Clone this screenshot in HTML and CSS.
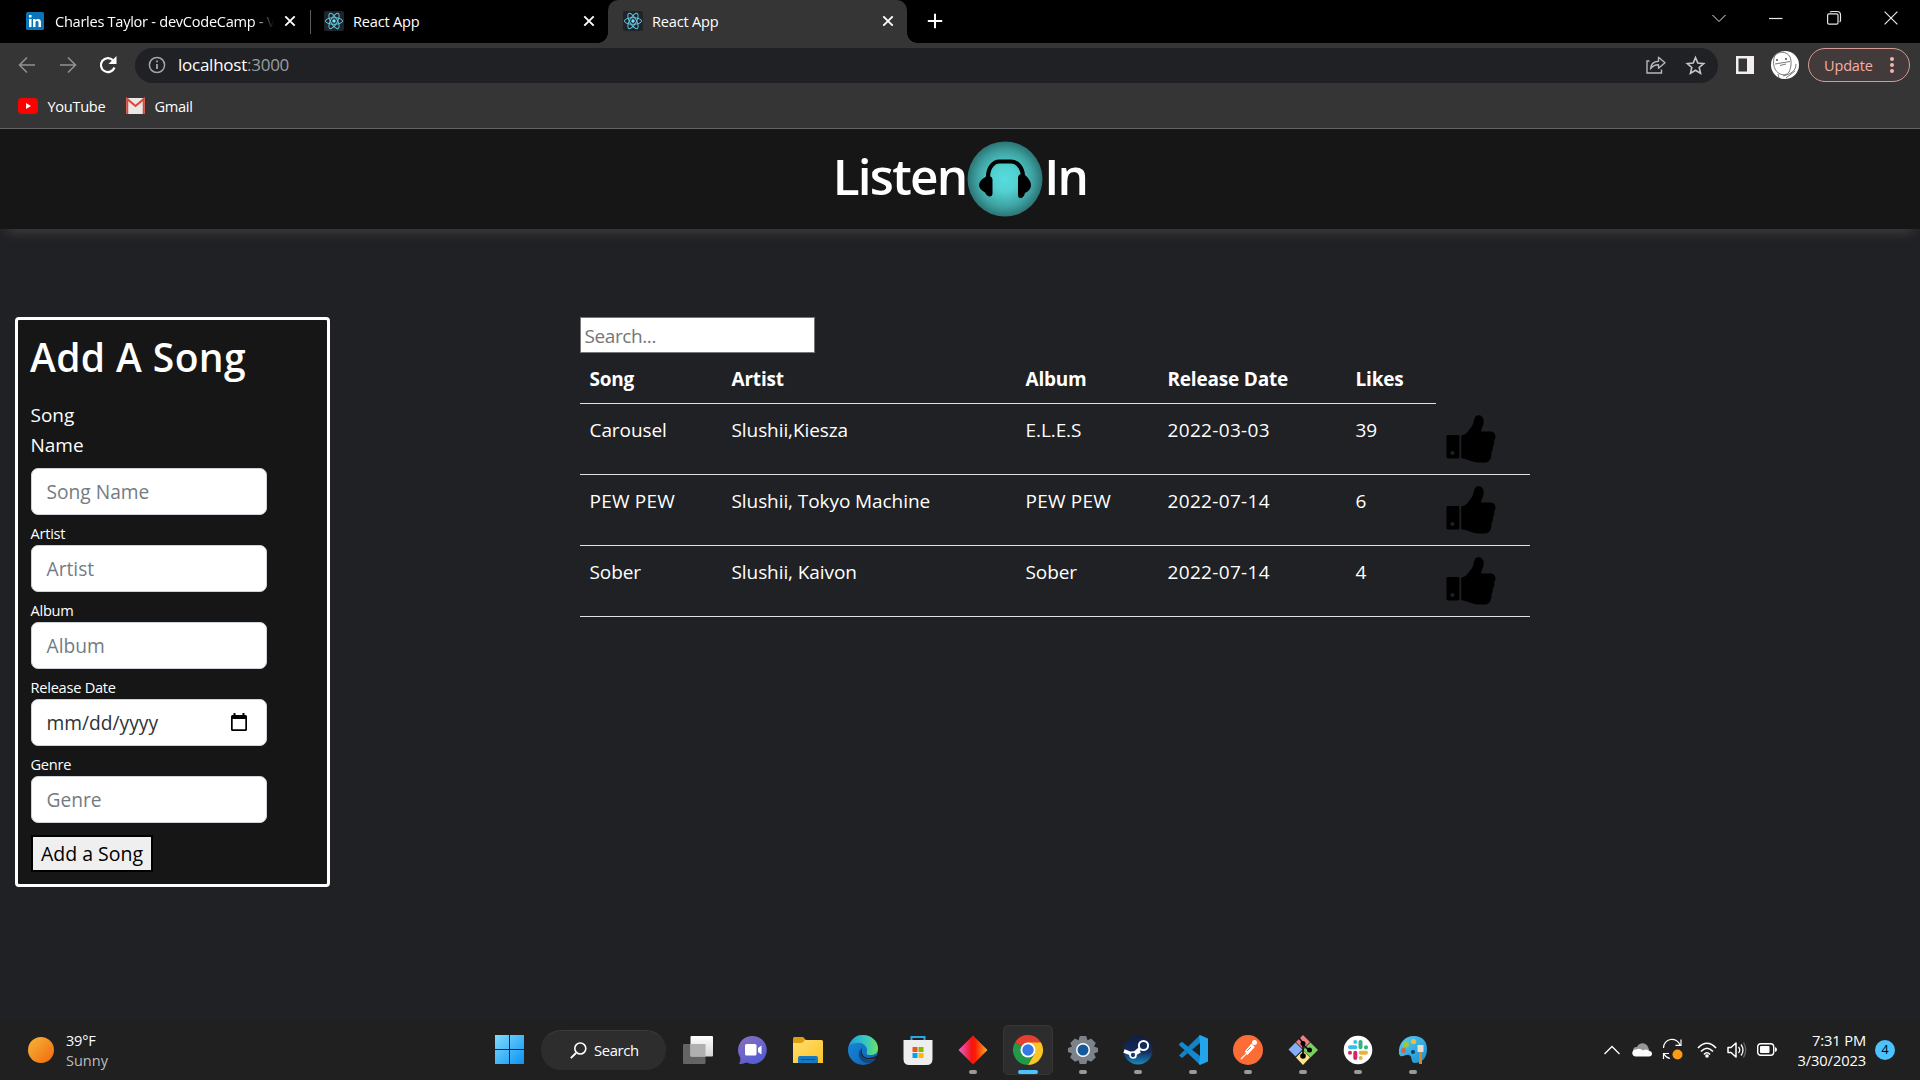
FILE: index.html
```html
<!DOCTYPE html>
<html lang="en">
<head>
<meta charset="utf-8">
<title>React App</title>
<link rel="stylesheet" href="styles.css">
</head>
<body>
<svg class="defs" width="0" height="0" aria-hidden="true">
  <symbol id="react" viewBox="0 0 20 20">
    <rect width="20" height="20" rx="2" fill="#20232a"/>
    <g fill="none" stroke="#5fc6de" stroke-width="1">
      <ellipse cx="10" cy="10" rx="8.6" ry="3.3"/>
      <ellipse cx="10" cy="10" rx="8.6" ry="3.3" transform="rotate(60 10 10)"/>
      <ellipse cx="10" cy="10" rx="8.6" ry="3.3" transform="rotate(120 10 10)"/>
    </g>
    <circle cx="10" cy="10" r="1.7" fill="#7fe3f5"/>
  </symbol>
  <symbol id="close" viewBox="0 0 12 12"><path d="M1.3 1.3l9.4 9.4M10.7 1.3l-9.4 9.4" stroke="#fff" stroke-width="1.9"/></symbol>
  <symbol id="thumb" viewBox="0 0 50 50">
    <path fill="#000" fill-rule="evenodd" d="M1.5 20.5h10.3q1.4 0 1.4 1.4v21q0 1.4-1.4 1.4H1.5Q0 44.300 0 42.900v-21Q0 20.500 1.500 20.500zM6 36.800a2 2 0 1 0 .01 0z"/>
    <path fill="#000" d="M16.500 20.500c4-.8 6.500-5.500 9.200-8.800 2.500-3.200 1.800-8 4-10.400C32.300-.9 38 .600 38 6.500c0 4-2.300 7-2.800 10.300h9.600c3.200 0 5.200 2.500 5.200 5.200 0 2.500-1.300 3.600-1.600 4.300.8 2 .4 4.600-1.200 6 .4 2.400-.2 4.400-1.300 5.700.2 6-2 10.500-6.900 10.500h-6c-7 0-10.500-3.300-16.600-4q-1.400-.2-1.400-1.500V22q0-1.300 1.500-1.500z"/>
  </symbol>
</svg>

<header class="tabs">
  <div class="tab first">
    <svg class="fav" viewBox="0 0 18 18"><rect width="18" height="18" rx="1.500" fill="#0a74b8"/><path fill="#fff" d="M3 7h2.500v8H3zM3 3h2.500v2.500H3zM7 7h2.400v1.200C10.500 6.300 15 6.100 15 10v5h-2.500v-4.500c0-2-3-1.800-3 0V15H7z"/></svg>
    <span class="tab-title fade">Charles Taylor - devCodeCamp - V</span>
    <svg class="x"><use href="#close"/></svg>
  </div>
  <div class="tab second">
    <svg class="fav"><use href="#react"/></svg>
    <span class="tab-title">React App</span>
    <svg class="x"><use href="#close"/></svg>
  </div>
  <div class="tab active">
    <svg class="fav"><use href="#react"/></svg>
    <span class="tab-title">React App</span>
    <svg class="x"><use href="#close"/></svg>
  </div>
  <svg class="plus" viewBox="0 0 16 16"><path d="M8 .8v14.400M.8 8h14.400" stroke="#fff" stroke-width="2"/></svg>
  <div class="window-controls">
    <svg viewBox="0 0 14 14"><path d="M.5 4l6.500 6.500L13.500 4"/></svg>
    <svg viewBox="0 0 14 14"><path d="M0 7.500h13.500"/></svg>
    <svg viewBox="0 0 14 14"><rect x=".6" y="2.800" width="10.400" height="10.400" rx="1.500"/><path d="M3 1.200Q3.500.5 5 .5h5q3.500 0 3.500 3.500v5q0 1.500-.8 2"/></svg>
    <svg viewBox="0 0 14 14"><path d="M.6.600l12.800 12.800M13.400.600L.6 13.400"/></svg>
  </div>
</header>

<nav class="toolbar">
  <div class="nav-buttons">
    <svg viewBox="0 0 18 18" stroke="#909193"><path d="M17 9H2M9 1.500L1.500 9 9 16.500"/></svg>
    <svg viewBox="0 0 18 18" stroke="#909193"><path d="M1 9h15M9 1.500L16.500 9 9 16.500"/></svg>
    <svg viewBox="0 0 18 18" stroke="#fff"><path stroke-width="2.200" d="M15.500 11.500A7 7 0 1 1 14 4.200"/><path fill="#fff" stroke="none" d="M17.500 0v8h-8z"/></svg>
  </div>
  <div class="omnibox">
    <svg class="info" viewBox="0 0 18 18"><circle cx="9" cy="9" r="7.600" fill="none" stroke="#a2a5a9" stroke-width="1.500"/><path d="M9 8v5M9 4.500v1.800" stroke="#a2a5a9" stroke-width="1.800"/></svg>
    <span class="url">localhost<i>:3000</i></span>
    <svg class="share" viewBox="0 0 20 18" fill="none" stroke="#b5b8bb" stroke-width="1.400"><path d="M3.500 5H1v12h14.500v-3.500"/><path stroke-linejoin="round" d="M4.500 13c.3-5 3.500-7.600 8-7.800V1.200L19 6.800l-6.500 5.500V8.800c-4 0-6.300 1.300-8 4.200z"/></svg>
    <svg class="star" viewBox="0 0 18 18"><path fill="none" stroke="#c4c6c8" stroke-width="1.500" d="M9 1.500l2.200 5.200 5.600.5-4.300 3.700 1.300 5.500L9 13.500l-4.800 2.900 1.300-5.500L1.200 7.200l5.600-.5z"/></svg>
  </div>
  <svg class="panel" viewBox="0 0 18 18"><path fill="#f4eef2" fill-rule="evenodd" d="M0 0h18v18H0zM2.500 2.500v13H11v-13z"/></svg>
  <svg class="avatar" viewBox="0 0 28 28"><circle cx="14" cy="14" r="14" fill="#fff"/><g fill="none" stroke="#6a6a6a" stroke-width=".9"><path d="M4 4.500C8 0 16 0 19 6c2 5 1 11-1 15-3 5-11 3-14-3C2 14 2 8 4 4.500zM4 13l15-2.500M9 14.500l6-1.500M25 13c0 6-4 10-13 12M7 23l1 4M15 27l9-7"/></g><circle cx="6" cy="9" r=".9" fill="#333"/><circle cx="15" cy="8" r=".9" fill="#333"/></svg>
  <div class="update"><span>Update</span><svg viewBox="0 0 4 18" fill="#f3b5ae"><circle cx="2" cy="3" r="2"/><circle cx="2" cy="9" r="2"/><circle cx="2" cy="15" r="2"/></svg></div>
</nav>

<div class="bookmarks">
  <svg class="yt" viewBox="0 0 20 14"><rect y="-1" width="20" height="16" rx="4" fill="#f00"/><path d="M8 4l5 3-5 3z" fill="#fff"/></svg>
  <span class="bm-youtube">YouTube</span>
  <svg class="gm" viewBox="0 0 19 14"><rect y="-1" width="19" height="16" rx="1" fill="#eae7e5"/><path d="M1.200 15V0l8.300 7 8.300-7v15" fill="none" stroke="#d9463b" stroke-width="2.100"/></svg>
  <span class="bm-gmail">Gmail</span>
</div>

<div class="brand">
  <h1>Listen</h1>
  <svg viewBox="0 0 76 76">
    <defs><radialGradient id="teal"><stop offset="0" stop-color="#58dcdc"/><stop offset=".35" stop-color="#52d0d0"/><stop offset=".75" stop-color="#3ea1a1"/><stop offset="1" stop-color="#2c7474"/></radialGradient></defs>
    <circle cx="38" cy="38" r="37.500" fill="url(#teal)"/>
    <path d="M21 36C21 26 27 20.500 32 20.500h12c6 0 12 6 12 15.500" fill="none" stroke="#000" stroke-width="4.200"/>
    <path d="M18.500 36q1-1.500 3.500-1 3.500.5 3.500 4v13q0 4-3.500 3.500Q19.500 55 18 51.500c-8-4-8-11 .5-15.500zM51 37q0-3.500 3.500-4 2.500-.5 3.500 1c8 7 8 14 0 18-1 4-3 5.500-5 5-2-.5-2-2-2-4z" fill="#000"/>
  </svg>
  <h1>In</h1>
</div>

<main class="page">
  <form class="song-form">
    <h2>Add A Song</h2>
    <label class="name-label">Song<br>Name</label>
    <div class="field"><span>Song Name</span></div>
    <label>Artist</label>
    <div class="field"><span>Artist</span></div>
    <label>Album</label>
    <div class="field"><span>Album</span></div>
    <label>Release Date</label>
    <div class="field date"><span>mm/dd/yyyy</span>
      <svg viewBox="0 0 16 18"><path fill="#000" fill-rule="evenodd" d="M2.500 0h2v2h7V0h2v2h1Q16 2 16 3.500v13q0 1.500-1.500 1.500h-13Q0 18 0 16.500v-13Q0 2 1.500 2h1zM1.700 6v10.300h12.600V6z"/></svg></div>
    <label>Genre</label>
    <div class="field"><span>Genre</span></div>
    <button type="button"><span>Add a Song</span></button>
  </form>

  <section class="songs">
    <div class="search">Search...</div>
    <div class="row head"><span>Song</span><span>Artist</span><span>Album</span><span>Release Date</span><span>Likes</span></div>
    <div class="row"><span>Carousel</span><span>Slushii,Kiesza</span><span>E.L.E.S</span><span class="day">2022-03-03</span><span>39</span><svg><use href="#thumb"/></svg></div>
    <div class="row"><span class="caps">PEW PEW</span><span>Slushii, Tokyo Machine</span><span class="caps">PEW PEW</span><span class="day">2022-07-14</span><span>6</span><svg><use href="#thumb"/></svg></div>
    <div class="row"><span>Sober</span><span>Slushii, Kaivon</span><span>Sober</span><span class="day">2022-07-14</span><span>4</span><svg><use href="#thumb"/></svg></div>
  </section>
</main>

<footer class="taskbar">
  <div class="weather"><div class="sun"></div><p>39°F<br><em>Sunny</em></p></div>
  <div class="apps">
    <svg class="win" viewBox="0 0 29 29"><defs><linearGradient id="wg" gradientUnits="userSpaceOnUse" x1="0" y1="0" x2="29" y2="29"><stop offset="0" stop-color="#7fdcfb"/><stop offset="1" stop-color="#0c92f4"/></linearGradient></defs><path fill="url(#wg)" d="M0 0h14v14H0zM15 0h14v14H15zM0 15h14v14H0zM15 15h14v14H15z"/></svg>
    <div class="task-search"><svg viewBox="0 0 17 17"><path d="M.8 16.200L6 11" stroke="#fff" stroke-width="1.800"/><circle cx="10.300" cy="6.500" r="5.500" fill="none" stroke="#fff" stroke-width="1.600"/></svg><span>Search</span></div>

    <div class="app"><svg viewBox="0 0 30 30"><defs><linearGradient id="tv" x2="0" y2="1"><stop stop-color="#fff"/><stop offset="1" stop-color="#d5d5d5"/></linearGradient></defs><rect y="9" width="22.500" height="20" rx="1" fill="#646464"/><rect x="7.500" y="1" width="22.500" height="20.500" rx="1" fill="url(#tv)"/><path d="M7.500 9h15v12.500h-15z" fill="#b0b0b0"/></svg></div>
    <div class="app"><svg viewBox="0 0 30 30"><defs><linearGradient id="ch" x1="0" y1="0" x2=".6" y2="1"><stop stop-color="#8a70bd"/><stop offset="1" stop-color="#555cd3"/></linearGradient></defs><path d="M15 1a14 14 0 1 1-6.500 26.500Q5 29 1 29q2-3 1-7A14 14 0 0 1 15 1z" fill="url(#ch)"/><rect x="7" y="9" width="11.500" height="11.500" rx="1.500" fill="#fff"/><path d="M20 13l3.500-2.500v9L20 17z" fill="#fff"/></svg></div>
    <div class="app"><svg viewBox="0 0 30 30"><defs><linearGradient id="fo" x2="1" y2="1"><stop stop-color="#ffdd70"/><stop offset="1" stop-color="#fcc526"/></linearGradient></defs><path d="M0 3.500Q0 2 1.500 2H10l3 3v4H0z" fill="#dc9e12"/><path d="M0 8h9l3-3h16.500Q30 5 30 6.500V28H0z" fill="url(#fo)"/><path d="M5 28v-5q0-2 2-2h16q2 0 2 2v5z" fill="#167ac1"/><path d="M8 24.500h14" stroke="#0b4f91" stroke-width="1"/></svg></div>
    <div class="app"><svg viewBox="0 0 30 30"><defs><linearGradient id="e1"><stop stop-color="#229fdd"/><stop offset=".6" stop-color="#38c9bd"/><stop offset="1" stop-color="#6be35e"/></linearGradient><linearGradient id="e2" x2="1" y2="1"><stop stop-color="#168fdd"/><stop offset="1" stop-color="#1359ad"/></linearGradient></defs><circle cx="15" cy="15" r="15" fill="url(#e2)"/><path d="M1 11C4 3 9 0 15 0c8 0 15 6 15 13 0 5-3 7-7 7-6 0-4-2-4-5 0-4-5-8-10-7-4 0-7 1-8 3z" fill="url(#e1)"/><path d="M14 13c-6 4-3 14 5 15 4 0 7-2 9-4-2 0-9 3-13-2-2-3-2-6-1-9z" fill="#114884"/><path d="M15 12c-3 4-1 10 5 11 4 0 6-1 8-2l2-1-1 3c-8 3-16 1-16-6 0-2 1-4 2-5z" fill="#202020"/></svg></div>
    <div class="app"><svg viewBox="0 0 30 30"><path d="M8.500 6V2h13v4" fill="none" stroke="#29a9df" stroke-width="2"/><path d="M.5 5h29v19q0 6-6 6h-17q-6 0-6-6z" fill="#eee"/><path fill="#f25022" d="M9.500 12h5v5h-5z"/><path fill="#7fba00" d="M15.500 12h5v5h-5z"/><path fill="#00a4ef" d="M9.500 18h5v5h-5z"/><path fill="#ffb900" d="M15.500 18h5v5h-5z"/></svg></div>
    <div class="app open"><svg viewBox="0 0 30 30"><defs><linearGradient id="rd"><stop stop-color="#ed61d4"/><stop offset=".45" stop-color="#f51414"/><stop offset=".58" stop-color="#ff1c00"/><stop offset="1" stop-color="#f8b02f"/></linearGradient></defs><path d="M15 .5L29.500 15 15 29.500.5 15z" fill="url(#rd)"/></svg></div>
    <div class="app open current"><svg viewBox="0 0 30 30"><path d="M15 15L2 7.500A15 15 0 0 1 28 7.500z" fill="#e5402f"/><path d="M15 15L2 7.500A15 15 0 0 0 15 30l7-12z" fill="#229849"/><path d="M15 7.500h13A15 15 0 0 1 15 30l6.500-11.250z" fill="#fcc526"/><circle cx="15" cy="15" r="7.500" fill="#fff"/><circle cx="15" cy="15" r="5.700" fill="#3578e8"/></svg></div>
    <div class="app open"><svg viewBox="0 0 30 30"><path d="M11.800 1h6.400l1.300 4.200 3.600-1.600 4.700 4.500-1.800 3.500L30 13v4l-4 1.500 1.800 4-4.700 4.300-3.600-1.600-1.300 3.800h-6.400l-1.300-3.800-3.600 1.600-4.700-4.300 1.800-4L0 17v-4l4-1.400-1.800-3.500 4.700-4.500 3.600 1.600z" fill="#7c828a"/><circle cx="15" cy="15" r="7" fill="#fff"/><circle cx="15" cy="15" r="5.500" fill="#15599c"/></svg></div>
    <div class="app open"><svg viewBox="0 0 30 30"><defs><linearGradient id="st" x2="0" y2="1"><stop stop-color="#111d40"/><stop offset=".55" stop-color="#122c5c"/><stop offset="1" stop-color="#168ac0"/></linearGradient></defs><circle cx="15" cy="15" r="14.500" fill="url(#st)"/><path d="M1 16l9 3.500 7-6 4-1.500M10 20l7-4" fill="none" stroke="#fff" stroke-width="3.500"/><circle cx="20.500" cy="10.500" r="4.600" fill="#142b59" stroke="#fff" stroke-width="2"/><circle cx="10" cy="20" r="3" fill="#193b6d" stroke="#fff" stroke-width="1.700"/></svg></div>
    <div class="app open"><svg viewBox="0 0 30 30"><path d="M1 20.500L22 0v8L4 23zM1 9.500L22 30v-8L4 7z" fill="#1383c7"/><path d="M1.500 8.500L4 7l18 14v8L1 10z" fill="#1288d0"/><path d="M22 0l8 3.500v23L22 30l-1-1 1-7V8l-1-7z" fill="#23a5ee"/></svg></div>
    <div class="app open"><svg viewBox="0 0 30 30"><circle cx="15" cy="15" r="15" fill="#fb6c37"/><circle cx="21.500" cy="7.500" r="2.500" fill="#fff"/><path d="M18.500 9.500l2.500 2.500-6.500 7-2-2.500zM14 18l-6 6" stroke="#fff" stroke-width="1.200" fill="#fff"/><path d="M14 16l4-4" stroke="#fb6c37"/></svg></div>
    <div class="app open"><svg viewBox="0 0 30 30"><path d="M15 0l7 7-7 7-7-7z" fill="#f07f82"/><path d="M7.500 7.500l7 7-7 7-7-7z" fill="#82aff6"/><path d="M22.500 7.500l7.500 7.500-7.500 7.500-7.500-7.500z" fill="#7cd063"/><path d="M15 15.500l7 7-7 7.500-7-7.500z" fill="#fbe38a"/><path d="M11 3l4 5v13M15 10l6 5" fill="none" stroke="#1d1818" stroke-width="1.800"/><circle cx="15" cy="8.500" r="2.500"/><circle cx="21.500" cy="15" r="2.500"/><circle cx="15" cy="21" r="2.800"/></svg></div>
    <div class="app open"><svg viewBox="0 0 30 30"><circle cx="15" cy="15" r="14.300" fill="#fff"/><g stroke-width="4" stroke-linecap="round"><path d="M12.300 7v.1M7 12.300h5.300" stroke="#36bfe9"/><path d="M17.500 7v5.300M23 12.300v.1" stroke="#32b181"/><path d="M12.300 17.700V23M7 17.700v.1" stroke="#d72562"/><path d="M17.700 17.700H23M17.700 23v.1" stroke="#e7b33d"/></g></svg></div>
    <div class="app open"><svg viewBox="0 0 30 30"><defs><linearGradient id="pa" x2="1" y2="1"><stop stop-color="#58d1f2"/><stop offset="1" stop-color="#168bd2"/></linearGradient></defs><path d="M16 1c8 0 13 5 13 13 0 10-6 14-12 14-5 0-2-7-6-8-4-1-8 4-10-1C0 8 7 1 16 1z" fill="url(#pa)"/><circle cx="8" cy="9.500" r="3" fill="#9bc93c"/><circle cx="15.500" cy="6.500" r="2.600" fill="#f2bd2a"/><circle cx="5.500" cy="15.500" r="2.500" fill="#d9643f"/><circle cx="15" cy="17" r="2" fill="#173e66"/><path d="M19.500 10h6v7h-6z" fill="#e9ddd0"/><path d="M21 17h3v12h-3z" fill="#d88424"/></svg></div>
  </div>
  <div class="tray">
    <svg class="up" viewBox="0 0 16 10"><path d="M.5 9L8 1.500 15.500 9" fill="none" stroke="#fff" stroke-width="1.300"/></svg>
    <svg class="cloud" viewBox="0 0 20 14"><path d="M5 10C-1 9 1 3 5 4c2-5 9-5 11 0l2 5z" fill="#969696"/><path d="M4 13.500c-5 0-5-7 0-7 3-1.500 5-.5 7 1 3-2 5-1 6 .5 4 0 4 5.500 0 5.500z" fill="#fff"/></svg>
    <svg class="sync" viewBox="0 0 21 21"><g fill="none" stroke="#fff" stroke-width="1.200"><path d="M1.500 9A8.500 8.500 0 0 1 18 6M19 .5v5.800h-5.500M1.500 20v-5.500H7M2 15a9 9 0 0 0 6 4.500"/></g><circle cx="15.500" cy="15.500" r="5" fill="#ff9b12"/></svg>
    <svg class="wifi" viewBox="0 0 20 16"><g fill="none" stroke="#fff" stroke-width="1.700"><path d="M1 6q9-9.500 18 0M4 9.500q6-6.500 12 0M7 12.500q3-3.500 6 0"/></g><circle cx="10" cy="14" r="1.800" fill="#fff"/></svg>
    <svg class="vol" viewBox="0 0 20 16"><path d="M1 5.500v5h3l5 4.500V1L4 5.500z" fill="none" stroke="#fff" stroke-width="1.500" stroke-linejoin="round"/><path d="M11.500 5q2.500 3 0 6M14 2.500q4 5.500 0 11" fill="none" stroke="#fff" stroke-width="1.300"/><path d="M16.500.5q4.500 7.500 0 15" fill="none" stroke="#666" stroke-width="1.300"/></svg>
    <svg class="batt" viewBox="0 0 20 13"><rect x=".7" y=".7" width="16" height="11.600" rx="3" fill="none" stroke="#fff" stroke-width="1.400"/><rect x="3" y="3" width="9.500" height="7" rx="1" fill="#fff"/><path d="M18 4q2 .5 2 2.500T18 9z" fill="#fff"/></svg>
    <p class="clock">7:31 PM<br>3/30/2023</p>
    <div class="count">4</div>
  </div>
</footer>
</body>
</html>
```
FILE: styles.css
```css
* { box-sizing: border-box; }
body {
  margin: 0;
  width: 1920px;
  height: 1080px;
  overflow: hidden;
  display: flex;
  flex-direction: column;
  background: #202124;
  color: #fff;
  font-family: "Open Sans", "Noto Sans", sans-serif;
  font-size: 19px;
}
h1, h2, p { margin: 0; }
svg { display: block; flex: none; overflow: visible; }
.defs { display: none; }

/* Tab strip */
.tabs { display: flex; height: 43px; background: #000; align-items: flex-start; flex: none; }
.tab { display: flex; align-items: center; height: 43px; padding-bottom: 1px; font-size: 14.600px; letter-spacing: -0.200px; }
.tab.first { width: 311px; padding-left: 25px; background: linear-gradient(#5c5c5c, #5c5c5c) 310px 10px / 1px 24px no-repeat; }
.tab.second { width: 297px; padding-left: 13px; }
.tab.active { position: relative; width: 299px; padding-left: 15px; background: #353535; border-radius: 10px 10px 0 0; }
.tab.active::before, .tab.active::after { content: ""; position: absolute; bottom: 0; width: 10px; height: 10px; }
.tab.active::before { left: -10px; background: radial-gradient(circle at 0 0, transparent 9.500px, #353535 10px); }
.tab.active::after { right: -10px; background: radial-gradient(circle at 100% 0, transparent 9.500px, #353535 10px); }
.fav { width: 20px; height: 20px; margin-right: 9px; }
.first .fav { width: 18px; height: 18px; margin: 0 11px 0 1px; }
.tab-title { flex: none; width: 229.500px; white-space: nowrap; overflow: hidden; line-height: 22px; }
.fade { width: 220px; margin-right: 9px; mask-image: linear-gradient(90deg, #000 198px, transparent 219px); }
.first .tab-title { font-size: 14.600px; letter-spacing: -0.280px; }
.x { width: 12px; height: 12px; }
.plus { width: 16px; height: 16px; margin: 13px 0 0 20px; }
.window-controls { display: flex; gap: 43.500px; margin: 11px 22px 0 auto; }
.window-controls svg { width: 14px; height: 14px; fill: none; stroke: #e8e8e8; stroke-width: 1.200; }
.window-controls svg:first-child { stroke-width: 1; }

/* Address bar */
.toolbar { display: flex; align-items: center; height: 45px; padding: 0 10px 1px 18px; background: #353535; flex: none; }
.nav-buttons { display: flex; gap: 22.500px; width: 117px; }
.nav-buttons svg { width: 18px; height: 18px; fill: none; stroke-width: 1.600; }
.omnibox { display: flex; align-items: center; width: 1583px; height: 35px; padding: 0 13px 0 13px; border-radius: 18px; background: #202124; }
.info { width: 18px; height: 18px; margin-right: 12px; }
.url { font-size: 17px; letter-spacing: -0.250px; line-height: 24px; }
.url i { color: #9a9da1; font-style: normal; }
.share { width: 20px; height: 18px; margin-left: auto; margin-right: 20px; }
.star { width: 19px; height: 19px; }
.panel { width: 18px; height: 18px; margin-left: 18px; }
.avatar { width: 28px; height: 28px; margin-left: 17px; }
.update { display: flex; align-items: center; justify-content: space-between; width: 102px; height: 34px; margin-left: auto; padding: 0 15px; border: 1.500px solid #d69b95; border-radius: 17px; background: #433b3b; color: #f3aea7; font-size: 14.500px; letter-spacing: -0.150px; }
.update svg { width: 4px; height: 18px; }

/* Bookmarks */
.bookmarks { display: flex; align-items: center; height: 41px; padding: 0 0 5px 18px; background: #353535; border-bottom: 1px solid #626262; flex: none; font-size: 14.600px; letter-spacing: -0.320px; }
.yt { width: 20px; height: 14px; margin-right: 9.500px; }
.gm { width: 19px; height: 14px; margin-right: 10px; }
.bm-youtube { width: 78px; }

/* Brand header */
.brand { display: flex; justify-content: center; align-items: center; height: 100px; background: #161616; box-shadow: 0 11px 11px -7px #3c3c3c; flex: none; z-index: 1; }
.brand h1 { font-size: 49.500px; font-weight: 600; line-height: 60px; letter-spacing: -1.800px; margin-bottom: 7px; }
.brand svg { width: 76px; height: 76px; margin: 0 1px 0 1px; }

/* Page */
.page { display: flex; align-items: flex-start; height: 790px; padding: 88px 0 0 15px; flex: none; }
.song-form { display: flex; flex-direction: column; align-items: flex-start; width: 315px; height: 570px; padding: 12px 13px; border: 3px solid #fff; border-radius: 4px; background: #161616; }
.song-form h2 { height: 68px; font-size: 39px; font-weight: 600; line-height: 50px; letter-spacing: 0.400px; margin-left: -1px; }
.song-form label { height: 30px; padding-top: 7px; font-size: 14.600px; line-height: 22px; letter-spacing: -0.250px; margin-left: -0.500px; }
.song-form .name-label { height: 68px; padding: 0; font-size: 19px; line-height: 30px; letter-spacing: 0; }
.field { display: flex; align-items: center; justify-content: space-between; width: 236px; height: 47px; padding: 0 19px 0 14.500px; border: 1px solid #ced4da; border-radius: 7px; background: #fff; color: #737b83; font-size: 19.200px; }
.date { color: #2e3338; }
.date svg { width: 16px; height: 18px; margin-bottom: 2px; }
.song-form button { width: 122px; height: 37px; margin-top: 12px; padding: 0; border: 2px solid #000; background: #efefef; color: #000; font: inherit; font-size: 19.500px; white-space: nowrap; }

.songs { width: 950px; margin-left: 250px; }
.search { width: 235px; height: 36px; padding: 1px 3.500px; border: 1px solid #767676; background: #fff; color: #757575; line-height: 34px; letter-spacing: -0.400px; }
.row { display: grid; grid-template-columns: 142px 294px 142px 188px 90px 94px; height: 71px; padding-top: 10px; border-bottom: 1px solid #dee2e6; line-height: 32px; letter-spacing: -0.080px; }
.row span { padding-left: 9.500px; white-space: nowrap; }
.row .day { letter-spacing: 0.330px; }
.row .caps { letter-spacing: 0.220px; }
.row svg { width: 50px; height: 49px; margin: 1px 0 0 10px; }
.head { width: 856px; height: 51px; font-weight: 700; grid-template-columns: 142px 294px 142px 188px 90px; letter-spacing: -0.200px; }

/* Taskbar */
.taskbar { display: grid; grid-template-columns: 484px 1fr auto; height: 61px; background: #202020; flex: none; align-items: start; }
.weather { display: flex; padding: 12px 0 0 28px; align-items: center; font-size: 14.500px; line-height: 20px; letter-spacing: -0.200px; }
.sun { width: 26px; height: 26px; border-radius: 50%; background: linear-gradient(135deg, #f6b73c, #f2680c); margin: -2px 12px 0 0; }
.weather em { font-style: normal; color: #bdbdbd; letter-spacing: 0; }
.apps { display: flex; align-items: center; height: 61px; padding-left: 11px; }
.win { width: 29px; height: 29px; }
.task-search { display: flex; align-items: center; width: 125px; height: 40px; margin: 0 7px 0 17px; padding-left: 29px; border-radius: 20px; border-top: 1px solid #3c3c3c; background: #2d2d2d; font-size: 14.800px; letter-spacing: -0.350px; }
.task-search svg { width: 17px; height: 17px; margin-right: 7px; }
.app { position: relative; display: flex; align-items: center; justify-content: center; width: 50px; height: 50px; margin-right: 5px; border-radius: 5px; }
.app > svg { width: 30px; height: 30px; }
.open::after { content: ""; position: absolute; bottom: 1px; left: 21px; width: 8px; height: 4px; border-radius: 2px; background: #9a9a9a; }
.current { background: #2d2d2d; border: 1px solid #353535; }
.current::after { left: 14px; bottom: 0; width: 20px; background: #4cc2ff; }
.tray { display: flex; align-items: center; height: 61px; padding-right: 25px; }
.up { width: 16px; height: 10px; margin-right: 12px; }
.cloud { width: 20px; height: 14px; margin-right: 10px; }
.sync { width: 21px; height: 21px; margin-right: 14px; }
.wifi { width: 20px; height: 16px; margin-right: 10px; }
.vol { width: 20px; height: 16px; margin-right: 10px; }
.batt { width: 20px; height: 13px; }
.clock { width: 89px; margin-right: 9px; text-align: right; font-size: 14.700px; line-height: 20px; letter-spacing: -0.120px; white-space: nowrap; }
.count { width: 20px; height: 20px; border-radius: 50%; background: #4cc2ff; color: #000; text-align: center; font-size: 12.500px; line-height: 20px; }
```
